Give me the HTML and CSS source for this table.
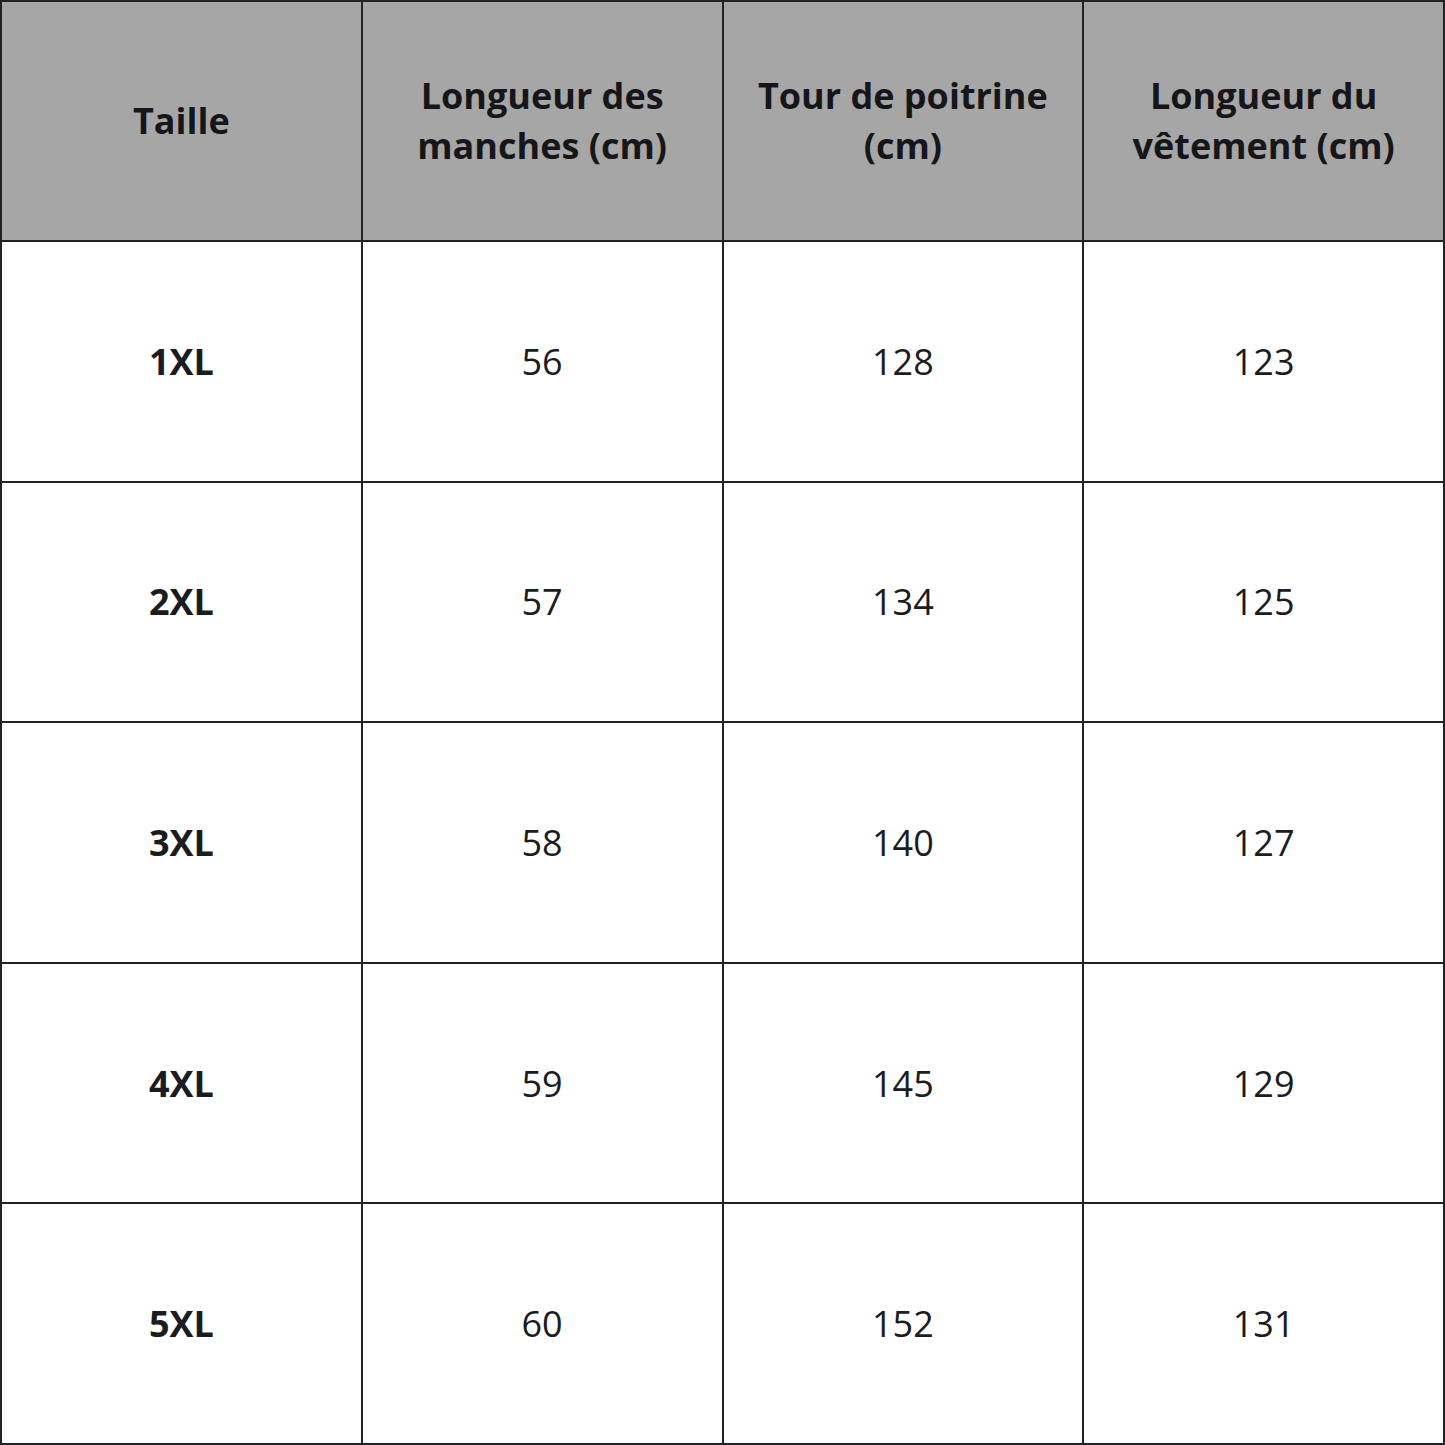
FILE: index.html
```html
<!DOCTYPE html>
<html lang="fr">
<head>
<meta charset="utf-8">
<link rel="stylesheet" href="styles.css">
</head>
<body>
<table class="sizes">
  <thead>
    <tr>
      <th>Taille</th>
      <th>Longueur des<br>manches (cm)</th>
      <th>Tour de poitrine<br>(cm)</th>
      <th>Longueur du<br>vêtement (cm)</th>
    </tr>
  </thead>
  <tbody>
    <tr><td class="size">1XL</td><td>56</td><td>128</td><td>123</td></tr>
    <tr><td class="size">2XL</td><td>57</td><td>134</td><td>125</td></tr>
    <tr><td class="size">3XL</td><td>58</td><td>140</td><td>127</td></tr>
    <tr><td class="size">4XL</td><td>59</td><td>145</td><td>129</td></tr>
    <tr><td class="size">5XL</td><td>60</td><td>152</td><td>131</td></tr>
  </tbody>
</table>
</body>
</html>
```
FILE: styles.css
```css
html, body {
  margin: 0;
  padding: 0;
  background: #ffffff;
}
.sizes {
  width: 1445px;
  height: 1445px;
  border-collapse: collapse;
  table-layout: fixed;
  font-family: "Open Sans", sans-serif;
  color: #1b1b20;
}
.sizes th,
.sizes td {
  border: 2px solid #222226;
  text-align: center;
  vertical-align: middle;
  padding: 0;
  height: 236px;
}
.sizes th {
  height: 238px;
  background: #a6a6a6;
  color: #16161a;
  font-weight: 700;
  font-size: 36px;
  line-height: 50px;
}
.sizes td {
  font-size: 36px;
  font-weight: 400;
}
.sizes td.size {
  font-weight: 700;
}
```
